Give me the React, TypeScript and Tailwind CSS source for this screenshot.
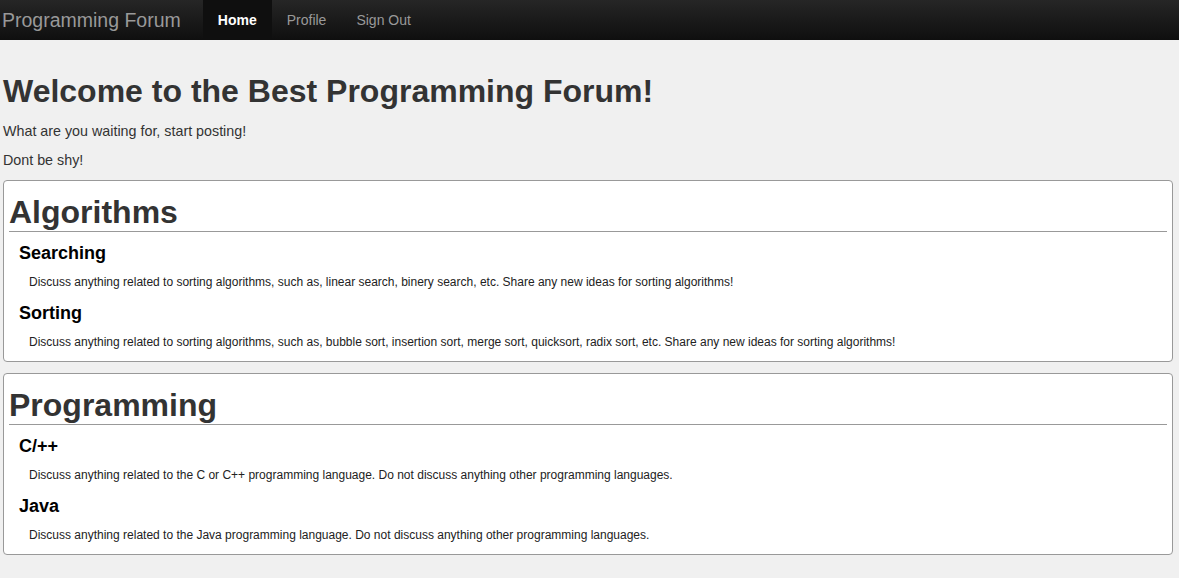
import React from 'react';

const categories = [
  {
    title: 'Algorithms',
    forums: [
      {
        name: 'Searching',
        description:
          'Discuss anything related to sorting algorithms, such as, linear search, binery search, etc. Share any new ideas for sorting algorithms!',
      },
      {
        name: 'Sorting',
        description:
          'Discuss anything related to sorting algorithms, such as, bubble sort, insertion sort, merge sort, quicksort, radix sort, etc. Share any new ideas for sorting algorithms!',
      },
    ],
  },
  {
    title: 'Programming',
    forums: [
      {
        name: 'C/++',
        description:
          'Discuss anything related to the C or C++ programming language. Do not discuss anything other programming languages.',
      },
      {
        name: 'Java',
        description:
          'Discuss anything related to the Java programming language. Do not discuss anything other programming languages.',
      },
    ],
  },
];

export default function App() {
  return (
    <div className="min-h-[578px] bg-[#f0f0f0] font-['Liberation_Sans',Arial,sans-serif] text-[#333]">
      <nav className="flex h-[40px] items-stretch bg-gradient-to-b from-[#262626] to-[#0f0f0f]">
        <a href="#" className="pl-[2px] pr-[22px] py-[10px] text-[19.5px] leading-[20px] text-[#999]">
          Programming Forum
        </a>
        <ul className="flex">
          <li>
            <a href="#" className="block bg-[#0f0f0f] px-[15px] py-[10px] text-[14px] font-bold leading-[20px] text-white">
              Home
            </a>
          </li>
          <li>
            <a href="#" className="block px-[15px] py-[10px] text-[14px] leading-[20px] text-[#999]">
              Profile
            </a>
          </li>
          <li>
            <a href="#" className="block px-[15px] py-[10px] text-[14px] leading-[20px] text-[#999]">
              Sign Out
            </a>
          </li>
        </ul>
      </nav>

      <main className="ml-[3px] mr-[6px] pb-[22px]">
        <h1 className="mt-[33px] text-[32px] font-bold leading-[36px]">Welcome to the Best Programming Forum!</h1>
        <p className="mt-[12px] text-[14.3px] leading-[20px]">What are you waiting for, start posting!</p>
        <p className="mt-[9px] text-[14.3px] leading-[20px]">Dont be shy!</p>

        {categories.map((cat, i) => (
          <section
            key={cat.title}
            className={`${i === 0 ? 'mt-[10px]' : 'mt-[11px]'} rounded-[4px] border border-[#999] bg-white px-[5px] pb-[10px]`}
          >
            <h1 className="mt-[13px] border-b border-[#999] pb-[1px] text-[32px] font-bold leading-[36px] text-[#333]">
              {cat.title}
            </h1>
            <div className="pl-[10px]">
              {cat.forums.map((f, j) => (
                <div key={f.name} className={j === 0 ? 'mt-[11px]' : 'mt-[12px]'}>
                  <h3 className="text-[18px] font-bold leading-[20px] text-black">{f.name}</h3>
                  <p className="mt-[10px] pl-[10px] text-[12px] leading-[18px] text-[#222]">{f.description}</p>
                </div>
              ))}
            </div>
          </section>
        ))}
      </main>
    </div>
  );
}
